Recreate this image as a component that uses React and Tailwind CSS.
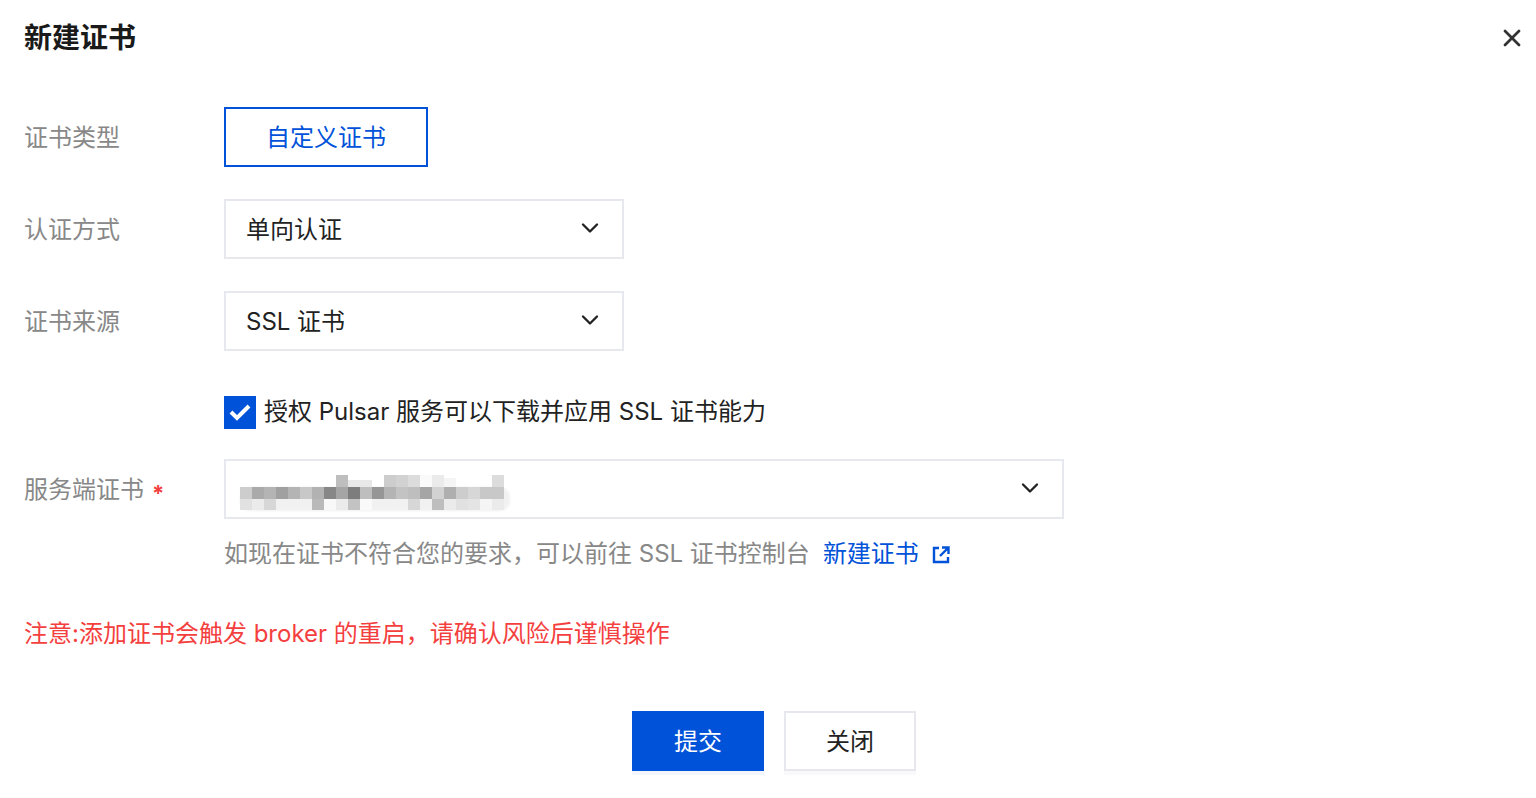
import React from 'react';
import { ChevronDown, X } from 'lucide-react';

const font = 'font-["Inter","Noto_Sans_CJK_SC",sans-serif]';

// mosaic over the certificate name: [x, y, grey level]
const mosaic = [
  [336, 475, 190], [348, 480, 232], [360, 480, 232], [384, 475, 205], [396, 475, 210], [408, 475, 220], [420, 475, 250],
  [432, 475, 235], [444, 478, 245], [492, 475, 220],
  [252, 487, 170], [264, 487, 180], [276, 487, 160], [288, 487, 180], [300, 487, 200], [312, 487, 178],
  [324, 487, 135], [336, 487, 165], [348, 487, 125], [360, 487, 190], [372, 487, 150], [384, 487, 180], [396, 487, 195],
  [408, 487, 190], [420, 487, 165], [432, 487, 210], [444, 487, 175], [456, 487, 205], [468, 487, 215], [480, 487, 200], [492, 487, 200],
  [252, 499, 235], [312, 499, 185], [324, 499, 248], [336, 499, 235], [348, 499, 195], [360, 499, 250],
  [408, 499, 215], [432, 499, 190], [444, 499, 235], [456, 499, 225], [468, 499, 228], [480, 499, 245], [492, 499, 235],
];

const Field = ({ label, required, children }) => (
  <div className="flex">
    <label className="w-[200px] shrink-0 h-[60px] pt-[2px] flex items-center text-[24px] text-[#888888]">
      {label}
      {required && <span className="ml-[8px] mt-[6px] text-[22px] font-bold text-[#f43f3f]">*</span>}
    </label>
    {children}
  </div>
);

const Select = ({ width, children }) => (
  <div className={`${width} h-[60px] border-2 border-[#e7e8ed] flex items-center justify-between pl-[20px] pt-[2px] pr-[18px] text-[24px] text-[#222222]`}>
    <span>{children}</span>
    <ChevronDown className="w-[28px] h-[28px] -mt-[4px] text-[#222222]" strokeWidth={2} />
  </div>
);

const App = () => {
  return (
    <div className={`w-[1536px] h-[798px] bg-white overflow-hidden flex flex-col pl-[24px] ${font}`}>
      <div className="h-[75px] flex items-center justify-between shrink-0">
        <h2 className="text-[28px] font-bold text-[#1a1a1a] leading-none">新建证书</h2>
        <X className="w-[28px] h-[28px] mr-[10px] text-[#333333]" strokeWidth={2.4} />
      </div>

      <div className="mt-[32px] flex flex-col gap-[32px]">
        <Field label="证书类型">
          <div className="w-[204px] h-[60px] pt-[2px] border-2 border-[#0052d9] flex items-center justify-center text-[24px] text-[#0052d9]">
            自定义证书
          </div>
        </Field>
        <Field label="认证方式">
          <Select width="w-[400px]">单向认证</Select>
        </Field>
        <Field label="证书来源">
          <Select width="w-[400px]">SSL 证书</Select>
        </Field>
      </div>

      <div className="mt-[45px] ml-[200px] flex items-center h-[32px]">
        <span className="w-[32px] h-[33px] bg-[#0052d9] flex items-center justify-center">
          <svg width="22" height="18" viewBox="0 0 22 18" fill="none" stroke="white" strokeWidth="4">
            <path d="M2 9l6 6L20 3" />
          </svg>
        </span>
        <span className="ml-[8px] text-[24px] text-[#222222]">授权 Pulsar 服务可以下载并应用 SSL 证书能力</span>
      </div>

      <div className="mt-[31px]">
        <Field label="服务端证书" required>
          <div className="relative w-[840px] h-[60px] border-2 border-[#e7e8ed] flex items-center justify-end pr-[18px]">
            <span className="absolute left-[14px] top-[26px] w-[270px] h-[24px] rounded-[10px] bg-[#f1f1f1] blur-[1px]" />
            <svg className="absolute left-[-2px] top-[-2px] blur-[0.5px]" width="300" height="60" viewBox="224 459 300 60">
              <rect x="240" y="487" width="12" height="12" fill="rgb(205,205,205)" />
              <rect x="240" y="499" width="12" height="11" fill="rgb(225,225,225)" />
              <rect x="264" y="499" width="12" height="11" fill="rgb(215,215,215)" />
              {mosaic.map(([x, y, g]) => (
                <rect key={`${x}-${y}`} x={x} y={y} width="12" height={y === 480 ? 7 : y === 478 ? 9 : y === 499 ? 11 : 12} fill={`rgb(${g},${g},${g})`} />
              ))}
            </svg>
            <ChevronDown className="w-[28px] h-[28px] -mt-[2px] text-[#222222] relative" strokeWidth={2} />
          </div>
        </Field>
      </div>

      <div className="mt-[16px] ml-[200px] pt-[2px] flex items-center h-[36px] text-[24px] text-[#888888]">
        如现在证书不符合您的要求，可以前往 SSL 证书控制台
        <span className="ml-[13px] text-[#0052d9]">新建证书</span>
        <svg className="ml-[12px] mt-[2px]" width="20" height="20" viewBox="0 0 20 20" fill="none" stroke="#0052d9" strokeWidth="2.4">
          <path d="M8 3H3v14h14v-5" />
          <path d="M11 2.5h6.5V9M17 3l-8 8" />
        </svg>
      </div>

      <p className="mt-[45px] h-[36px] flex items-center text-[24px] text-[#f43f3f]">
        注意:添加证书会触发 broker 的重启，请确认风险后谨慎操作
      </p>

      <div className="mt-[59px] flex justify-center gap-[20px] pr-[12px]">
        <button className="w-[132px] h-[60px] pt-[2px] bg-[#0052d9] text-white text-[24px] shadow-[0_4px_0_#f3f6fd]">提交</button>
        <button className="w-[132px] h-[60px] pt-[2px] bg-white border-2 border-[#e7e8ed] text-[#222222] text-[24px] shadow-[0_4px_0_#f9f9fb]">关闭</button>
      </div>
    </div>
  );
};

export default App;
